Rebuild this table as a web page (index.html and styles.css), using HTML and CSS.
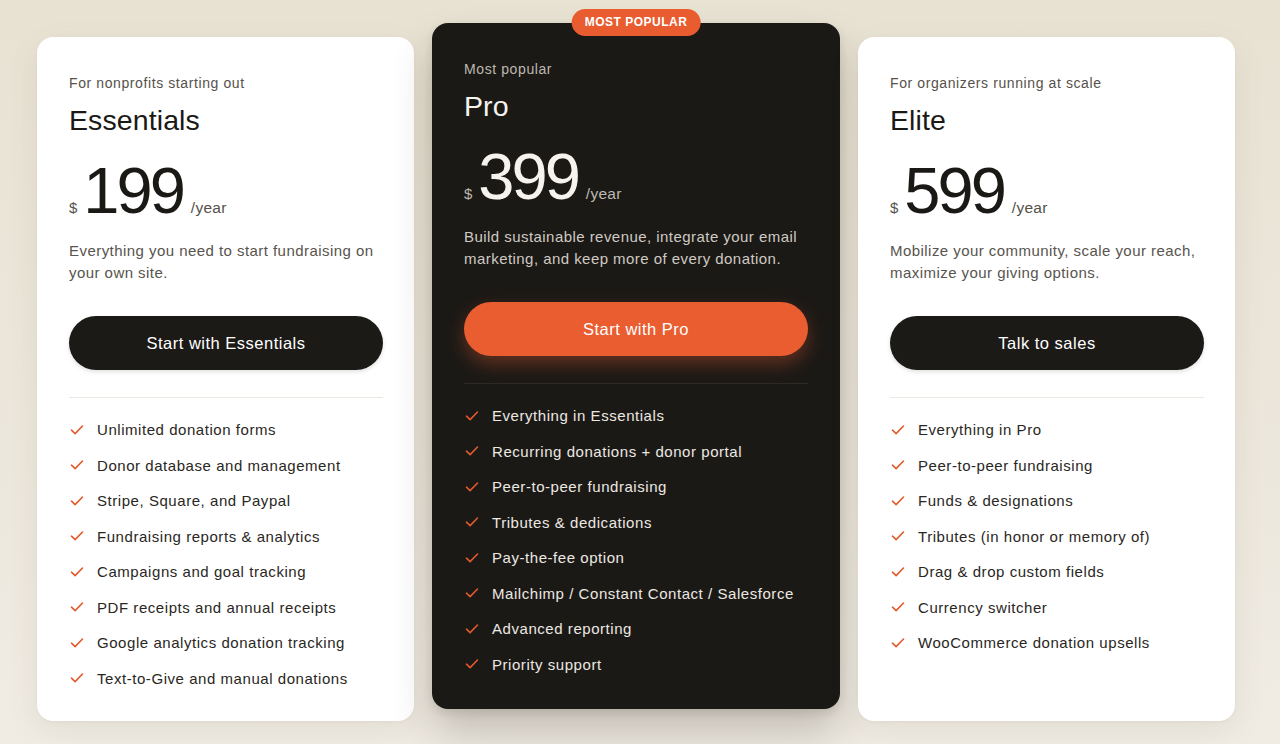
FILE: index.html
```html
<!DOCTYPE html>
<html lang="en">
<head>
<meta charset="utf-8">
<title>Pricing</title>
<link rel="stylesheet" href="styles.css">
</head>
<body>
<main class="pricing">
  <section class="card">
    <p class="eyebrow">For nonprofits starting out</p>
    <h2 class="plan">Essentials</h2>
    <div class="price"><span class="cur">$</span><span class="amount">199</span><span class="per">/year</span></div>
    <p class="desc">Everything you need to start fundraising on your own site.</p>
    <a class="btn">Start with Essentials</a>
    <hr class="rule">
    <ul class="features">
      <li><svg viewBox="0 0 14 14"><path d="M1.5 7.2l3.6 3.4 7.4-7.6"/></svg>Unlimited donation forms</li>
      <li><svg viewBox="0 0 14 14"><path d="M1.5 7.2l3.6 3.4 7.4-7.6"/></svg>Donor database and management</li>
      <li><svg viewBox="0 0 14 14"><path d="M1.5 7.2l3.6 3.4 7.4-7.6"/></svg>Stripe, Square, and Paypal</li>
      <li><svg viewBox="0 0 14 14"><path d="M1.5 7.2l3.6 3.4 7.4-7.6"/></svg>Fundraising reports &amp; analytics</li>
      <li><svg viewBox="0 0 14 14"><path d="M1.5 7.2l3.6 3.4 7.4-7.6"/></svg>Campaigns and goal tracking</li>
      <li><svg viewBox="0 0 14 14"><path d="M1.5 7.2l3.6 3.4 7.4-7.6"/></svg>PDF receipts and annual receipts</li>
      <li><svg viewBox="0 0 14 14"><path d="M1.5 7.2l3.6 3.4 7.4-7.6"/></svg>Google analytics donation tracking</li>
      <li><svg viewBox="0 0 14 14"><path d="M1.5 7.2l3.6 3.4 7.4-7.6"/></svg>Text-to-Give and manual donations</li>
    </ul>
  </section>

  <section class="card card-pro">
    <span class="badge">MOST POPULAR</span>
    <p class="eyebrow">Most popular</p>
    <h2 class="plan">Pro</h2>
    <div class="price"><span class="cur">$</span><span class="amount">399</span><span class="per">/year</span></div>
    <p class="desc">Build sustainable revenue, integrate your email marketing, and keep more of every donation.</p>
    <a class="btn btn-accent">Start with Pro</a>
    <hr class="rule">
    <ul class="features">
      <li><svg viewBox="0 0 14 14"><path d="M1.5 7.2l3.6 3.4 7.4-7.6"/></svg>Everything in Essentials</li>
      <li><svg viewBox="0 0 14 14"><path d="M1.5 7.2l3.6 3.4 7.4-7.6"/></svg>Recurring donations + donor portal</li>
      <li><svg viewBox="0 0 14 14"><path d="M1.5 7.2l3.6 3.4 7.4-7.6"/></svg>Peer-to-peer fundraising</li>
      <li><svg viewBox="0 0 14 14"><path d="M1.5 7.2l3.6 3.4 7.4-7.6"/></svg>Tributes &amp; dedications</li>
      <li><svg viewBox="0 0 14 14"><path d="M1.5 7.2l3.6 3.4 7.4-7.6"/></svg>Pay-the-fee option</li>
      <li><svg viewBox="0 0 14 14"><path d="M1.5 7.2l3.6 3.4 7.4-7.6"/></svg>Mailchimp / Constant Contact / Salesforce</li>
      <li><svg viewBox="0 0 14 14"><path d="M1.5 7.2l3.6 3.4 7.4-7.6"/></svg>Advanced reporting</li>
      <li><svg viewBox="0 0 14 14"><path d="M1.5 7.2l3.6 3.4 7.4-7.6"/></svg>Priority support</li>
    </ul>
  </section>

  <section class="card">
    <p class="eyebrow">For organizers running at scale</p>
    <h2 class="plan">Elite</h2>
    <div class="price"><span class="cur">$</span><span class="amount">599</span><span class="per">/year</span></div>
    <p class="desc">Mobilize your community, scale your reach, maximize your giving options.</p>
    <a class="btn">Talk to sales</a>
    <hr class="rule">
    <ul class="features">
      <li><svg viewBox="0 0 14 14"><path d="M1.5 7.2l3.6 3.4 7.4-7.6"/></svg>Everything in Pro</li>
      <li><svg viewBox="0 0 14 14"><path d="M1.5 7.2l3.6 3.4 7.4-7.6"/></svg>Peer-to-peer fundraising</li>
      <li><svg viewBox="0 0 14 14"><path d="M1.5 7.2l3.6 3.4 7.4-7.6"/></svg>Funds &amp; designations</li>
      <li><svg viewBox="0 0 14 14"><path d="M1.5 7.2l3.6 3.4 7.4-7.6"/></svg>Tributes (in honor or memory of)</li>
      <li><svg viewBox="0 0 14 14"><path d="M1.5 7.2l3.6 3.4 7.4-7.6"/></svg>Drag &amp; drop custom fields</li>
      <li><svg viewBox="0 0 14 14"><path d="M1.5 7.2l3.6 3.4 7.4-7.6"/></svg>Currency switcher</li>
      <li><svg viewBox="0 0 14 14"><path d="M1.5 7.2l3.6 3.4 7.4-7.6"/></svg>WooCommerce donation upsells</li>
    </ul>
  </section>
</main>
</body>
</html>
```

FILE: styles.css
```css
* { box-sizing: border-box; }

html, body {
  margin: 0;
  height: 100%;
}

body {
  font-family: "Liberation Sans", Arial, sans-serif;
  background: linear-gradient(180deg, #e8e2d3 0%, #ece7dc 60%, #f0ece4 100%);
  color: #1b1916;
  overflow: hidden;
}

.pricing {
  display: grid;
  grid-template-columns: 377px 408px 377px;
  gap: 18px;
  padding: 37px 45px 0 37px;
  align-items: start;
}

.card {
  position: relative;
  background: #ffffff;
  border-radius: 16px;
  padding: 36px 31px 0 32px;
  height: 684px;
  box-shadow: 0 10px 30px rgba(120, 100, 70, 0.10), 0 1px 3px rgba(120, 100, 70, 0.06);
}

.card-pro {
  background: #1b1916;
  color: #f6f3ee;
  transform: translateY(-14px);
  height: 686px;
  padding-right: 32px;
  box-shadow: 0 24px 40px rgba(40, 30, 20, 0.22), 0 4px 10px rgba(40, 30, 20, 0.12);
}

.badge {
  position: absolute;
  top: -14px;
  left: 50%;
  transform: translateX(-50%);
  background: #e85c2f;
  color: #fff;
  font-size: 12px;
  font-weight: 700;
  letter-spacing: 0.5px;
  height: 27px;
  line-height: 27px;
  padding: 0 13px;
  border-radius: 14px;
  white-space: nowrap;
}

.eyebrow {
  margin: 0;
  font-size: 14px;
  line-height: 20px;
  color: #55514b;
  letter-spacing: 0.6px;
}

.card-pro .eyebrow { color: #bdb8b0; }

.plan {
  margin: 10px 0 0;
  font-size: 28.5px;
  font-weight: 400;
  line-height: 34px;
  letter-spacing: 0.1px;
}

.price {
  display: flex;
  align-items: baseline;
  margin-top: 19px;
  height: 70px;
}

.cur {
  font-size: 15px;
  color: #55514b;
  margin-right: 6px;
}

.amount {
  font-size: 65px;
  line-height: 70px;
  letter-spacing: -3px;
}

.per {
  font-size: 15.5px;
  color: #55514b;
  margin-left: 8px;
  letter-spacing: 0.3px;
}

.card-pro .cur, .card-pro .per { color: #bdb8b0; }

.desc {
  margin: 14px 0 0;
  font-size: 15px;
  line-height: 22px;
  color: #58544e;
  letter-spacing: 0.45px;
}

.card-pro .desc { color: #cfcac2; }

.btn {
  display: flex;
  align-items: center;
  justify-content: center;
  margin-top: 32px;
  height: 54px;
  border-radius: 27px;
  background: #1c1a17;
  color: #ffffff;
  font-size: 16.5px;
  font-weight: 500;
  text-decoration: none;
  letter-spacing: 0.5px;
  box-shadow: 0 2px 4px rgba(0, 0, 0, 0.12);
}

.btn-accent {
  background: #e95d30;
  box-shadow: 0 8px 18px rgba(233, 93, 48, 0.35);
}

.rule {
  margin: 27px 0 0;
  border: 0;
  border-top: 1px solid #ebe8e2;
}

.card-pro .rule { border-top-color: #2e2b27; }

.features {
  list-style: none;
  margin: 14px 0 0;
  padding: 0;
}

.features li {
  display: flex;
  align-items: center;
  height: 35.5px;
  font-size: 15px;
  color: #2a2723;
  letter-spacing: 0.55px;
}

.card-pro .features li { color: #ece8e2; }

.features svg {
  width: 14px;
  height: 14px;
  margin: 0 13px 0 1px;
  flex: none;
  fill: none;
  stroke: #e25a2c;
  stroke-width: 1.6;
  stroke-linecap: round;
  stroke-linejoin: round;
}
```
